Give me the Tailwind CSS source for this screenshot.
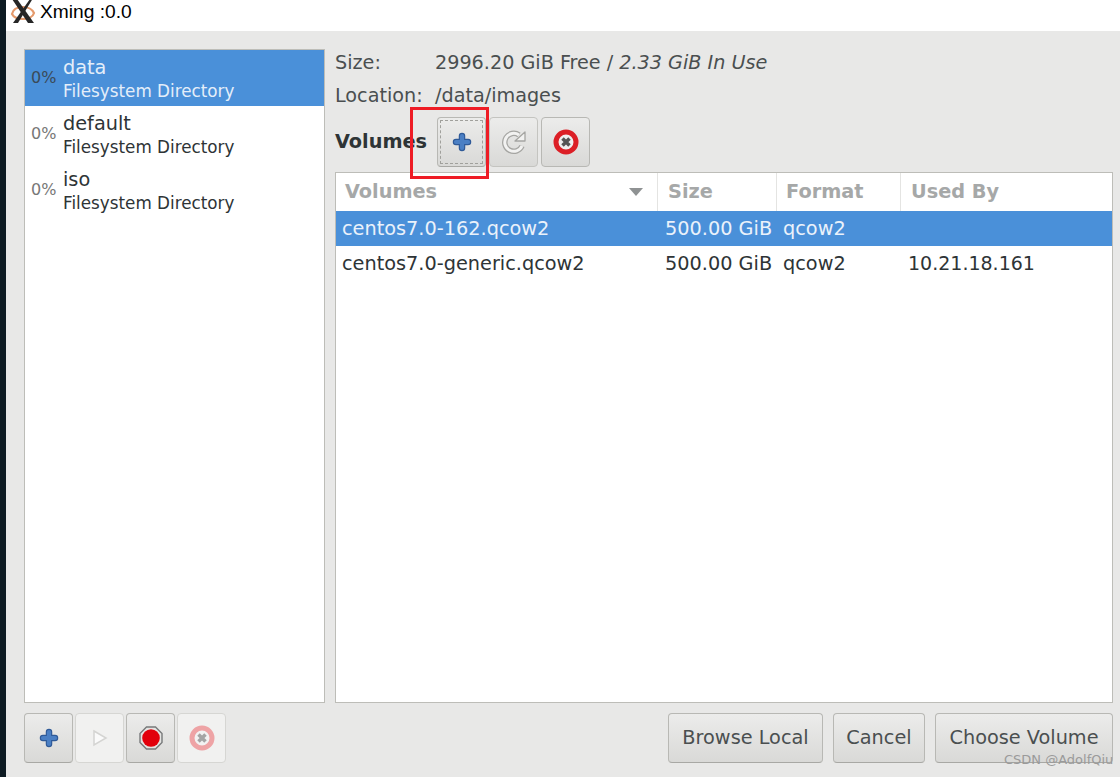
<!DOCTYPE html>
<html lang="en">
  <head>
    <meta charset="UTF-8" />
    <title>Xming :0.0</title>
    <script src="https://cdn.jsdelivr.net/npm/@tailwindcss/browser@4"></script>
  </head>
  <body class="m-0 overflow-hidden">
    <div class="relative flex h-[777px] w-[1120px] bg-[#0d1a22] font-['DejaVu_Sans',sans-serif]">
      <div class="ml-[6px] flex w-[1114px] flex-col">
        <!-- title bar -->
        <div class="flex h-[31px] items-center bg-white pb-[7px] font-['Liberation_Sans',sans-serif] text-[19.2px] text-black">
          <svg class="ml-[3px] h-[27px] w-[28px]" viewBox="0 0 28 27">
            <path d="M3 15c1-5 6-7 11-7s9 2 11 6c-1 4-6 6-11 6s-9-1-11-5z" fill="none" stroke="#e59a6c" stroke-width="2.2" />
            <path d="M3 0h5l17 24h-6z" fill="#262626" />
            <path d="M21 0h2.500L9 24H4z" fill="#262626" />
          </svg>
          <span class="ml-[3px]">Xming :0.0</span>
        </div>

        <!-- dialog -->
        <div class="flex h-[746px] flex-col bg-[#e8e8e7] pl-[18px] pr-[7px] pt-[18px]">
          <div class="flex h-[654px] gap-[10px]">
            <!-- pool list -->
            <div class="h-full w-[301px] border border-[#bdbdb8] bg-white text-[#2e3436]">
              <div class="flex h-[56px] bg-[#4a90d9] text-white">
                <span class="ml-[6px] mt-[19px] w-[32px] text-[16px] leading-[18px] text-[#3a4a58]">0%</span>
                <div>
                  <div class="mt-[6px] text-[19.3px] leading-[24px] text-[#e4eef9]">data</div>
                  <div class="text-[16.8px] leading-[23px] text-[#e4eef9]">Filesystem Directory</div>
                </div>
              </div>
              <div class="flex h-[56px]">
                <span class="ml-[6px] mt-[19px] w-[32px] text-[16px] leading-[18px] text-[#777]">0%</span>
                <div>
                  <div class="mt-[6px] text-[19.3px] leading-[24px]">default</div>
                  <div class="text-[16.8px] leading-[23px]">Filesystem Directory</div>
                </div>
              </div>
              <div class="flex h-[56px]">
                <span class="ml-[6px] mt-[19px] w-[32px] text-[16px] leading-[18px] text-[#777]">0%</span>
                <div>
                  <div class="mt-[6px] text-[19.3px] leading-[24px]">iso</div>
                  <div class="text-[16.8px] leading-[23px]">Filesystem Directory</div>
                </div>
              </div>
            </div>

            <!-- right side -->
            <div class="flex w-[778px] flex-col">
              <div class="mt-[2px] flex h-[25px] items-center text-[19.2px] text-[#4a4f50]">
                <span class="w-[100px]">Size:</span>
                <span>2996.20 GiB Free / <i>2.33 GiB In Use</i></span>
              </div>
              <div class="mt-[8px] flex h-[25px] items-center text-[19.2px] text-[#4a4f50]">
                <span class="w-[100px]">Location:</span>
                <span>/data/images</span>
              </div>
              <div class="mt-[7px] flex h-[51px] items-center">
                <span class="w-[102px] pt-[2px] text-[19.3px] font-bold text-[#2e3436]">Volumes</span>
                <button class="flex h-[50px] w-[49px] items-center justify-center rounded-[4px] border border-[#b8b8b4] border-b-[#a8a8a4] bg-gradient-to-b from-[#ececeb] to-[#d9d9d7] p-[2px]">
                  <span class="flex h-full w-full items-center justify-center border border-dashed border-[#a0a09c]">
                    <svg class="h-[22px] w-[22px]" viewBox="0 0 22 22">
                      <path d="M11 5v12M5 11h12" fill="none" stroke="#2f5a98" stroke-width="6.500" stroke-linecap="round" />
                      <path d="M11 5v12M5 11h12" fill="none" stroke="#4a7fc4" stroke-width="4.200" stroke-linecap="round" />
                    </svg>
                  </span>
                </button>
                <button class="ml-[3px] flex h-[50px] w-[49px] items-center justify-center rounded-[4px] border border-[#c4c4c0] bg-gradient-to-b from-[#ececeb] to-[#d9d9d7]">
                  <svg class="h-[26px] w-[26px]" viewBox="0 0 26 26">
                    <path d="M21 17a9 9 0 1 1-3-11" fill="none" stroke="#a5a5a2" stroke-width="5.500" />
                    <path d="M21 17a9 9 0 1 1-3-11" fill="none" stroke="#f2f2f1" stroke-width="3" />
                    <path d="M14 12h10V3z" fill="#f2f2f1" stroke="#a5a5a2" stroke-width="1.300" stroke-linejoin="round" />
                  </svg>
                </button>
                <button class="ml-[3px] flex h-[50px] w-[49px] items-center justify-center rounded-[4px] border border-[#b8b8b4] bg-gradient-to-b from-[#ececeb] to-[#d9d9d7]">
                  <svg class="h-[26px] w-[26px]" viewBox="0 0 26 26">
                    <circle cx="13" cy="13" r="10" fill="#efefef" stroke="#dc1f26" stroke-width="5" />
                    <path d="M9.500 9.500l7 7M16.500 9.500l-7 7" stroke="#555" stroke-width="3.500" />
                  </svg>
                </button>
              </div>

              <!-- volumes table -->
              <div class="mt-[5px] min-h-0 flex-1 border border-[#bdbdb8] bg-white text-[19.3px] text-[#2e3436]">
                <div class="flex h-[38px] font-bold text-[#a6a8a8]">
                  <div class="relative flex w-[322px] items-center border-r border-[#e4e4e2] pl-[9px]">
                    Volumes
                    <svg class="absolute right-[14px] top-[15px] h-[8px] w-[14px]" viewBox="0 0 14 8"><path d="M0 0h14L7 8z" fill="#8f9293" /></svg>
                  </div>
                  <div class="flex w-[119px] items-center border-r border-[#e4e4e2] pl-[10px]">Size</div>
                  <div class="flex w-[124px] items-center border-r border-[#e4e4e2] pl-[9px]">Format</div>
                  <div class="flex items-center pl-[10px]">Used By</div>
                </div>
                <div class="flex h-[35px] items-center bg-[#4a90d9] pt-[1px] text-[#eaf2fb]">
                  <div class="w-[322px] pl-[6px]">centos7.0-162.qcow2</div>
                  <div class="w-[119px] pl-[7px]">500.00 GiB</div>
                  <div class="w-[124px] pl-[6px]">qcow2</div>
                </div>
                <div class="flex h-[35px] items-center pt-[1px]">
                  <div class="w-[322px] pl-[6px]">centos7.0-generic.qcow2</div>
                  <div class="w-[119px] pl-[7px]">500.00 GiB</div>
                  <div class="w-[124px] pl-[6px]">qcow2</div>
                  <div class="mb-[2px] pl-[7px] text-[19px]">10.21.18.161</div>
                </div>
              </div>
            </div>
          </div>

          <!-- bottom buttons -->
          <div class="mt-[10px] flex h-[50px] items-center">
            <button class="flex h-[50px] w-[49px] items-center justify-center rounded-[4px] border border-[#b8b8b4] border-b-[#a8a8a4] bg-gradient-to-b from-[#ececeb] to-[#d9d9d7]">
              <svg class="h-[22px] w-[22px]" viewBox="0 0 22 22">
                <path d="M11 5v12M5 11h12" fill="none" stroke="#2f5a98" stroke-width="6.500" stroke-linecap="round" />
                <path d="M11 5v12M5 11h12" fill="none" stroke="#4a7fc4" stroke-width="4.200" stroke-linecap="round" />
              </svg>
            </button>
            <button class="ml-[2px] flex h-[50px] w-[49px] items-center justify-center rounded-[4px] border border-[#d6d6d3] bg-[#f1f1f0]">
              <svg class="h-[18px] w-[18px]" viewBox="0 0 18 18"><path d="M3 2l12 7-12 7z" fill="#fafafa" stroke="#d4d4d2" stroke-width="1.500" /></svg>
            </button>
            <button class="ml-[2px] flex h-[50px] w-[49px] items-center justify-center rounded-[4px] border border-[#b8b8b4] border-b-[#a8a8a4] bg-gradient-to-b from-[#ececeb] to-[#d9d9d7]">
              <svg class="h-[24px] w-[24px]" viewBox="0 0 24 24">
                <path d="M7.500 1h9L23 7.500v9L16.500 23h-9L1 16.500v-9z" fill="#e4e4e2" stroke="#77797a" stroke-width="1.400" />
                <circle cx="12" cy="12" r="8.800" fill="#e2000b" />
              </svg>
            </button>
            <button class="ml-[2px] flex h-[50px] w-[49px] items-center justify-center rounded-[4px] border border-[#d6d6d3] bg-[#f1f1f0]">
              <svg class="h-[26px] w-[26px]" viewBox="0 0 26 26">
                <circle cx="13" cy="13" r="10" fill="#f2f2f2" stroke="#eea3a5" stroke-width="5" />
                <path d="M9.500 9.500l7 7M16.500 9.500l-7 7" stroke="#a4a4a4" stroke-width="3.500" />
              </svg>
            </button>
            <button class="ml-auto h-[50px] w-[155px] rounded-[4px] border border-[#b8b8b4] border-b-[#a8a8a4] bg-gradient-to-b from-[#ececeb] to-[#d9d9d7] text-[19.3px] text-[#4a4f50]">Browse Local</button>
            <button class="ml-[10px] h-[50px] w-[92px] rounded-[4px] border border-[#b8b8b4] border-b-[#a8a8a4] bg-gradient-to-b from-[#ececeb] to-[#d9d9d7] text-[19.3px] text-[#4a4f50]">Cancel</button>
            <button class="ml-[10px] h-[50px] w-[178px] rounded-[4px] border border-[#b8b8b4] border-b-[#a8a8a4] bg-gradient-to-b from-[#ececeb] to-[#d9d9d7] text-[19.3px] text-[#4a4f50]">Choose Volume</button>
          </div>
        </div>
      </div>

      <!-- annotation and watermark lie over the screenshot -->
      <div class="absolute left-[410px] top-[107px] h-[72px] w-[79px] border-[3px] border-[#ee1c25]"></div>
      <div class="absolute left-[1004px] top-[752px] text-[13px] leading-[16px] text-[#9a9a9a]">CSDN @AdolfQiu</div>
    </div>
  </body>
</html>
